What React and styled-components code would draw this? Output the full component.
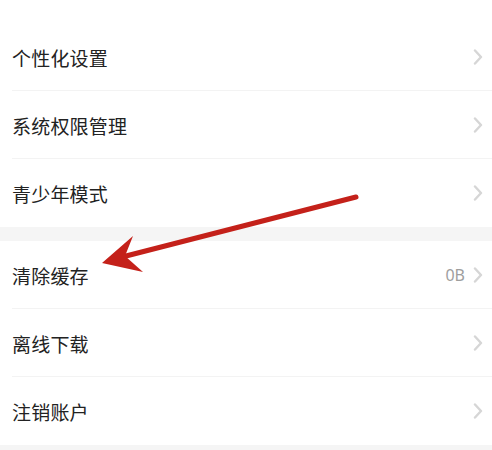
import React from "react";
import styled, { createGlobalStyle } from "styled-components";

const GlobalStyle = createGlobalStyle`
  html, body {
    margin: 0;
    padding: 0;
    background: #f5f5f5;
    overflow: hidden;
  }
  body {
    font-family: "Noto Sans CJK SC", "Noto Sans", sans-serif;
  }
`;

const ROW_HEIGHT = 68;

const Screen = styled.div`
  position: relative;
  width: 492px;
  height: 450px;
  background: #f5f5f5;
  overflow: hidden;
`;

const TopEdge = styled.div`
  height: 23px;
  background: #fff;
`;

const Group = styled.section`
  background: #fff;
  margin-bottom: ${p => p.$gap || 0}px;
`;

const Row = styled.div`
  height: ${ROW_HEIGHT}px;
  display: flex;
  align-items: center;
  padding: 0 9px 0 12px;
  position: relative;
  &:not(:last-child)::after {
    content: "";
    position: absolute;
    left: 12px;
    right: 0;
    bottom: 0;
    height: 1px;
    background: #f3f3f3;
  }
`;

const Label = styled.span`
  flex: 1;
  font-size: 19px;
  color: #222;
  letter-spacing: 0.2px;
`;

const Value = styled.span`
  font-family: "Noto Sans", "Liberation Sans", sans-serif;
  font-size: 16px;
  color: #9e9e9e;
  margin-right: 8px;
`;

const Chevron = () => (
  <svg width="10" height="16" viewBox="0 0 10 16">
    <path
      d="M2 1.5 L8 8 L2 14.5"
      fill="none"
      stroke="#d6d6d6"
      strokeWidth="2.4"
      strokeLinecap="round"
      strokeLinejoin="round"
    />
  </svg>
);

const Arrow = styled.svg`
  position: absolute;
  left: 0;
  top: 0;
  pointer-events: none;
`;

const groups = [
  { gap: 14, items: [{ label: "个性化设置" }, { label: "系统权限管理" }, { label: "青少年模式" }] },
  { gap: 0, items: [{ label: "清除缓存", value: "0B" }, { label: "离线下载" }, { label: "注销账户" }] },
];

export default function App() {
  return (
    <Screen>
      <GlobalStyle />
      <TopEdge />
      {groups.map((g, i) => (
        <Group key={i} $gap={g.gap}>
          {g.items.map(item => (
            <Row key={item.label}>
              <Label>{item.label}</Label>
              {item.value && <Value>{item.value}</Value>}
              <Chevron />
            </Row>
          ))}
        </Group>
      ))}

      <Arrow width="492" height="450" viewBox="0 0 492 450">
        <line x1="356" y1="197" x2="126" y2="256" stroke="#c4211a" strokeWidth="5" strokeLinecap="round" />
        <polygon points="102,263 133,236 125,256 143,272" fill="#c4211a" />
      </Arrow>
    </Screen>
  );
}
